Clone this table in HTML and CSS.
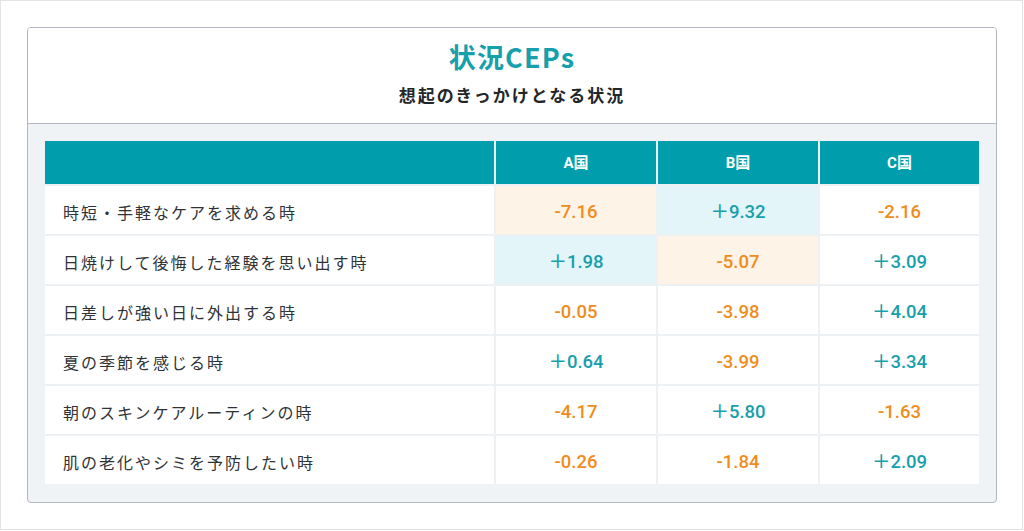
FILE: index.html
```html
<!DOCTYPE html>
<html lang="ja">
<head>
<meta charset="utf-8">
<link rel="stylesheet" href="styles.css">
</head>
<body>
<div class="frame">
  <div class="card">
    <div class="card-head">
      <h1 class="title">状況CEPs</h1>
      <p class="subtitle">想起のきっかけとなる状況</p>
    </div>
    <div class="card-body">
      <div class="grid">
        <div class="hcell"></div>
        <div class="hcell">A国</div>
        <div class="hcell">B国</div>
        <div class="hcell">C国</div>

        <div class="label">時短・手軽なケアを求める時</div>
        <div class="val neg hl-neg">-7.16</div>
        <div class="val pos hl-pos">＋9.32</div>
        <div class="val neg">-2.16</div>

        <div class="label">日焼けして後悔した経験を思い出す時</div>
        <div class="val pos hl-pos">＋1.98</div>
        <div class="val neg hl-neg">-5.07</div>
        <div class="val pos">＋3.09</div>

        <div class="label">日差しが強い日に外出する時</div>
        <div class="val neg">-0.05</div>
        <div class="val neg">-3.98</div>
        <div class="val pos">＋4.04</div>

        <div class="label">夏の季節を感じる時</div>
        <div class="val pos">＋0.64</div>
        <div class="val neg">-3.99</div>
        <div class="val pos">＋3.34</div>

        <div class="label">朝のスキンケアルーティンの時</div>
        <div class="val neg">-4.17</div>
        <div class="val pos">＋5.80</div>
        <div class="val neg">-1.63</div>

        <div class="label">肌の老化やシミを予防したい時</div>
        <div class="val neg">-0.26</div>
        <div class="val neg">-1.84</div>
        <div class="val pos">＋2.09</div>
      </div>
    </div>
  </div>
</div>
</body>
</html>
```
FILE: styles.css
```css
* { box-sizing: border-box; }
html, body { margin: 0; padding: 0; background: #ffffff; }
body { font-family: "Noto Sans CJK JP", "Noto Sans", sans-serif; }

.frame {
  width: 1023px;
  height: 530px;
  border: 1px solid #e3e3e3;
  padding: 26px 0 0 26px;
}

.card {
  width: 970px;
  border: 1px solid #b3b7bf;
  border-radius: 4px;
  overflow: hidden;
  background: #f0f3f6;
}

.card-head {
  height: 96px;
  background: #ffffff;
  border-bottom: 1px solid #b3b7bf;
  display: flex;
  flex-direction: column;
  align-items: center;
  padding-top: 12px;
}

.title {
  margin: 0;
  font-family: "Noto Sans CJK JP", sans-serif;
  font-weight: 700;
  font-size: 27px;
  line-height: 34px;
  color: #16a0ac;
  letter-spacing: 1.2px;
}

.subtitle {
  margin: 9px 0 0;
  font-weight: 700;
  font-size: 17px;
  line-height: 24px;
  color: #222629;
  letter-spacing: 2px;
}

.card-body {
  padding: 17px 17px 18px 17px;
}

.grid {
  display: grid;
  grid-template-columns: 449px 160px 160px 159px;
  grid-template-rows: 43px repeat(6, 48px);
  column-gap: 2px;
  row-gap: 2px;
  background: #eef1f4;
}

.hcell {
  background: #009eac;
  color: #ffffff;
  font-family: "Roboto", "Noto Sans CJK JP", sans-serif;
  font-weight: 700;
  font-size: 15px;
  line-height: 20px;
  display: flex;
  align-items: center;
  justify-content: center;
  padding-top: 1px;
}

.label {
  background: #ffffff;
  color: #2f3336;
  font-size: 16px;
  line-height: 24px;
  letter-spacing: 2px;
  display: flex;
  align-items: center;
  padding-left: 18px;
  padding-top: 4px;
}

.val {
  background: #ffffff;
  font-family: "Roboto", "Noto Sans CJK JP", sans-serif;
  font-weight: 500;
  font-size: 18.5px;
  line-height: 24px;
  display: flex;
  align-items: center;
  justify-content: center;
  padding-top: 4px;
}

.neg { color: #f08c1c; }
.pos { color: #179fac; }
.hl-neg { background: #fdf3e6; }
.hl-pos { background: #e3f5f9; }
```
